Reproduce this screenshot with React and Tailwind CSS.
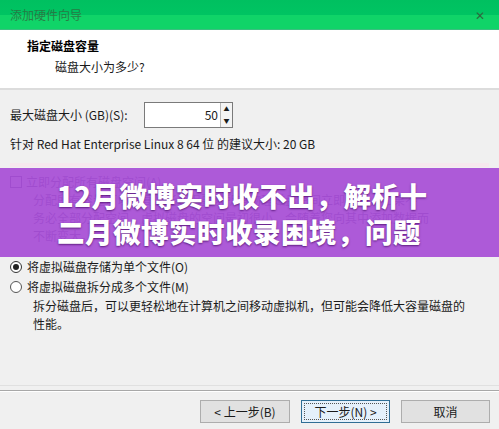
import React from "react";

const font = { fontFamily: '"Noto Sans CJK SC", "Noto Sans", sans-serif' };

export default function App() {
  return (
    <div
      className="relative w-[499px] h-[429px] overflow-hidden bg-[#f0f0f0] text-[12px] text-[#1a1a1a]"
      style={font}
    >
      {/* title bar */}
      <div className="h-[30px] flex items-center justify-between px-[10px] bg-[linear-gradient(#00c060_0%,#00c462_50%,#10d468_51%,#10d468_100%)] border-b border-[#3bbf80]">
        <span className="text-[12px] text-[#2f6a3e] opacity-80">添加硬件向导</span>
        <span className="text-[12px] text-[#2f6a3e] mr-[4px]">✕</span>
      </div>
      {/* header */}
      <div className="h-[60px] bg-white border-b-2 border-[#dcdcdc] pl-[27px] pt-[6px]">
        <div className="font-bold text-[12px] leading-[20px] text-black">指定磁盘容量</div>
        <div className="pl-[28px] leading-[20px] mt-[1px]">磁盘大小为多少?</div>
      </div>
      {/* body */}
      <div className="px-[10px] pt-[12px]">
        <div className="flex items-center h-[26px]">
          <span className="w-[134px]">最大磁盘大小 (GB)(S):</span>
          <div className="flex h-[26px] w-[89px] border border-[#7a7a7a] bg-white">
            <div className="flex-1 text-right pr-[2px] leading-[24px]">50</div>
            <div className="w-[12px] flex flex-col border-l border-[#b8b8b8] text-[6px] leading-[12px] text-center bg-[#f4f4f4]">
              <span>▲</span>
              <span>▼</span>
            </div>
          </div>
        </div>
        <div className="mt-[7px] leading-[18px]">
          针对 Red Hat Enterprise Linux 8 64 位 的建议大小: 20 GB
        </div>
        <div className="mt-[10px] h-[4px] bg-[#f6e8ee]"></div>
        {/* content under banner */}
        <div className="mt-[6px] text-[#3a2a6a] leading-[18px]">
          <div className="flex items-center gap-[4px]">
            <span className="w-[12px] h-[12px] border border-[#3a2a6a]"></span>
            <span>立即分配所有磁盘空间(A)。</span>
          </div>
          <div className="pl-[23px]">分配所有容量可以提高性能，但要求所有物理磁盘空间立即可用。如果不</div>
          <div className="pl-[23px]">务必全部分配空间，虚拟磁盘的空间最初很小，会随着您向其中添加数据而</div>
          <div className="pl-[23px]">不断变大。</div>
        </div>
        <div className="mt-[12px] leading-[20px]">
          <div className="flex items-center gap-[5px]">
            <span className="w-[12px] h-[12px] rounded-full border border-[#333] bg-white flex items-center justify-center">
              <span className="w-[6px] h-[6px] rounded-full bg-[#222]"></span>
            </span>
            <span>将虚拟磁盘存储为单个文件(O)</span>
          </div>
          <div className="flex items-center gap-[5px]">
            <span className="w-[12px] h-[12px] rounded-full border border-[#555] bg-white"></span>
            <span>将虚拟磁盘拆分成多个文件(M)</span>
          </div>
          <div className="pl-[23px] leading-[18px]">
            拆分磁盘后，可以更轻松地在计算机之间移动虚拟机，但可能会降低大容量磁盘的
          </div>
          <div className="pl-[23px] leading-[18px]">性能。</div>
        </div>
      </div>
      {/* separator */}
      <div className="absolute left-0 right-0 top-[385px] border-t border-[#e0e0e0]"></div>
      <div className="absolute left-0 right-0 top-[390px] border-t border-[#a8a8a8] border-b border-b-white"></div>
      {/* buttons */}
      <div className="absolute top-[400px] right-[9px] flex gap-[11px]">
        <button className="w-[90px] h-[23px] border border-[#adadad] bg-[#e1e1e1] text-[12px]">
          &lt; 上一步(B)
        </button>
        <button className="w-[89px] h-[23px] border border-[#2f6e95] bg-[#e5f1fb] text-[12px] outline-1 outline-dotted outline-offset-[-4px] outline-[#555]">
          下一步(N) &gt;
        </button>
        <button className="w-[89px] h-[23px] border border-[#adadad] bg-[#e1e1e1] text-[12px]">
          取消
        </button>
      </div>
      {/* purple banner overlay */}
      <div className="absolute left-0 right-0 top-[168px] h-[89px] bg-[#a84fd6]/[0.93] flex flex-col justify-center pl-[57px]">
        <div className="text-white font-black text-[27.5px] leading-[36px] tracking-[0.5px] [text-shadow:0_1px_2px_rgba(60,0,90,0.7)]">
          12月微博实时收不出，解析十
        </div>
        <div className="text-white font-black text-[27.5px] leading-[36px] tracking-[0.5px] [text-shadow:0_1px_2px_rgba(60,0,90,0.7)]">
          二月微博实时收录困境，问题
        </div>
      </div>
    </div>
  );
}
